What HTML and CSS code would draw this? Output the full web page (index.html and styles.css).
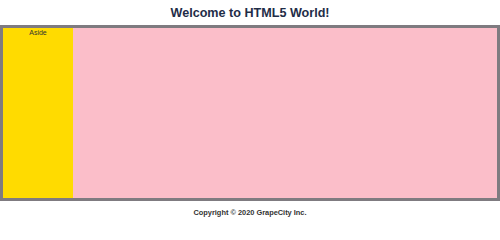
FILE: index.html
```html
<!DOCTYPE html>
<html>
<head>
<meta charset="utf-8">
<link rel="stylesheet" href="styles.css">
</head>
<body>
<header class="header"><h1 class="title">Welcome to HTML5 World!</h1></header>
<div class="frame">
  <aside class="aside">Aside</aside>
  <main class="main"></main>
</div>
<footer class="footer">Copyright © 2020 GrapeCity Inc.</footer>
</body>
</html>
```
FILE: styles.css
```css
html, body { margin: 0; padding: 0; background: #fff; }
body { font-family: "Liberation Sans", Arial, sans-serif; width: 500px; height: 222px; display: flex; flex-direction: column; }
.header { height: 25px; display: flex; align-items: center; justify-content: center; }
.title { margin: 0; font-size: 12.6px; font-weight: bold; color: #1f2d48; }
.frame { height: 170px; border: 3px solid #7f7b80; display: flex; }
.aside { width: 70px; background: #ffdb00; font-size: 7px; text-align: center; padding-top: 1px; color: #333; }
.main { flex: 1; background: #fbbec9; }
.footer { flex: 1; display: flex; align-items: center; justify-content: center; padding-top: 2px; font-size: 7.4px; font-weight: bold; color: #333; }
```
